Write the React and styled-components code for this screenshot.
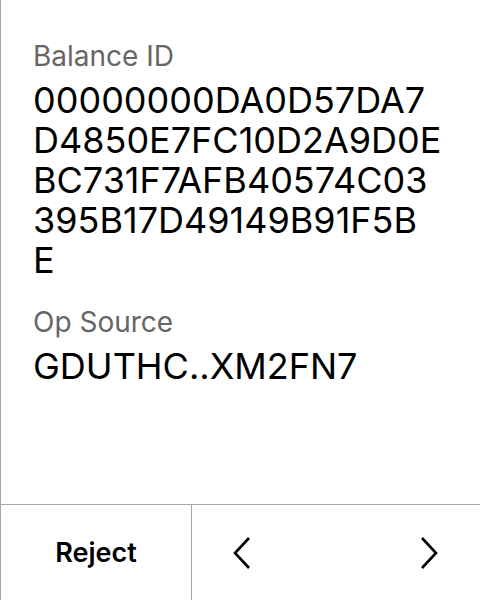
import styled, { createGlobalStyle } from 'styled-components'

const Global = createGlobalStyle`
  html, body {
    margin: 0;
    padding: 0;
    background: #fff;
  }
  body {
    font-family: Inter, 'Noto Sans', sans-serif;
    color: #000;
  }
`

const Screen = styled.div`
  width: 480px;
  height: 600px;
  box-sizing: border-box;
  border-left: 1px solid #a8a8a8;
  display: flex;
  flex-direction: column;
`

const Body = styled.div`
  flex: 1;
  padding: 39px 20px 0 32px;
  display: flex;
  flex-direction: column;
  gap: 25px;
`

const Field = styled.div`
  display: flex;
  flex-direction: column;
  gap: 7px;
`

const Label = styled.div`
  font-size: 28px;
  line-height: 34px;
  color: #666;
`

const Value = styled.div`
  font-size: 36px;
  line-height: 40px;
`

const Line = styled.span`
  display: block;
  white-space: nowrap;
`

const Footer = styled.div`
  height: 96px;
  box-sizing: border-box;
  border-top: 1px solid #a8a8a8;
  display: grid;
  grid-template-columns: 191px 1fr;
`

const RejectButton = styled.button`
  all: unset;
  display: flex;
  align-items: center;
  justify-content: center;
  font-family: Inter, sans-serif;
  font-weight: 600;
  font-size: 27px;
  border-right: 1px solid #a8a8a8;
`

const Nav = styled.div`
  display: flex;
  align-items: center;
  justify-content: space-between;
  padding: 0 42px 0 41px;
`

const Chevron = ({ dir }) => (
  <svg width="18" height="32" viewBox="0 0 18 32">
    <polyline
      points={dir === 'left' ? '16,1 2,16 16,31' : '2,1 16,16 2,31'}
      fill="none"
      stroke="#000"
      strokeWidth="2.6"
      strokeLinecap="butt"
      strokeLinejoin="miter"
    />
  </svg>
)

// the device wraps long values at fixed points
const balanceId = [
  '00000000DA0D57DA7',
  'D4850E7FC10D2A9D0E',
  'BC731F7AFB40574C03',
  '395B17D49149B91F5B',
  'E',
]

const fields = [
  { label: 'Balance ID', lines: balanceId },
  { label: 'Op Source', lines: ['GDUTHC..XM2FN7'] },
]

export default function App() {
  return (
    <>
      <Global />
      <Screen>
        <Body>
          {fields.map((f) => (
            <Field key={f.label}>
              <Label>{f.label}</Label>
              <Value>
                {f.lines.map((l, i) => (
                  <Line key={i}>{l}</Line>
                ))}
              </Value>
            </Field>
          ))}
        </Body>
        <Footer>
          <RejectButton>Reject</RejectButton>
          <Nav>
            <Chevron dir="left" />
            <Chevron dir="right" />
          </Nav>
        </Footer>
      </Screen>
    </>
  )
}
